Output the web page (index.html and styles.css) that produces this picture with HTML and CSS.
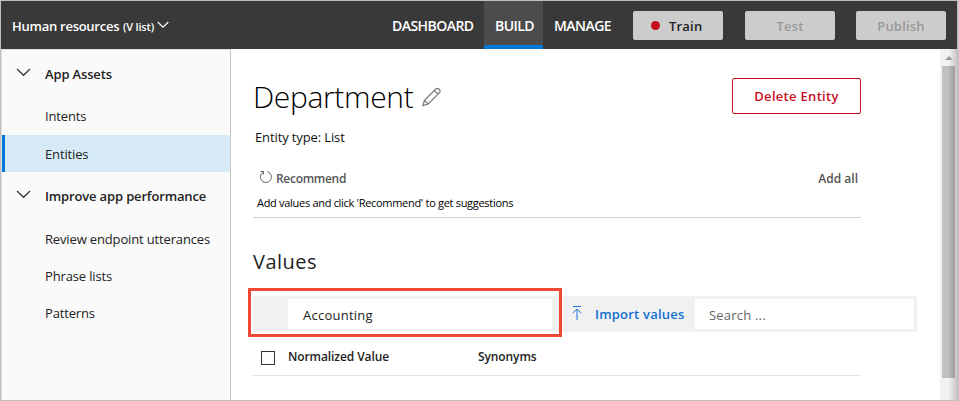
FILE: index.html
```html
<!DOCTYPE html>
<html lang="en">
<head>
<meta charset="utf-8">
<title>Human resources - Entities</title>
<link rel="stylesheet" href="styles.css">
</head>
<body>
<div class="app">
  <header class="topbar">
    <div class="app-name"><span class="name">Human resources</span><span class="version">(V list)</span>
      <svg class="chev-small" width="12" height="8" viewBox="0 0 12 8"><path d="M.7 1l5.3 5.200L11.300 1"/></svg>
    </div>
    <nav class="tabs">
      <a class="tab dashboard">DASHBOARD</a>
      <a class="tab build">BUILD</a>
      <a class="tab manage">MANAGE</a>
    </nav>
    <div class="actions">
      <button class="action train"><i class="dot"></i>Train</button>
      <button class="action test">Test</button>
      <button class="action publish">Publish</button>
    </div>
  </header>
  <div class="body">
    <aside class="sidebar">
      <div class="group"><svg width="15" height="9" viewBox="0 0 15 9"><path d="M1 1l6.500 6.300L14 1"/></svg><span>App Assets</span></div>
      <a class="item">Intents</a>
      <a class="item selected">Entities</a>
      <div class="group second"><svg width="15" height="9" viewBox="0 0 15 9"><path d="M1 1l6.500 6.300L14 1"/></svg><span>Improve app performance</span></div>
      <a class="item">Review endpoint utterances</a>
      <a class="item compact">Phrase lists</a>
      <a class="item">Patterns</a>
    </aside>
    <main class="main">
      <div class="title-row">
        <h1>Department</h1>
        <svg class="pencil" width="20" height="20" viewBox="0 0 20 20"><path d="M1 18.500L2.500 13.300 13.800 2Q15.500 .7 17.200 2.300 18.800 4 17.500 5.700L6.200 17ZM2.500 13.300L6.200 17M12.300 3.500L16 7.200"/></svg>
        <button class="delete">Delete Entity</button>
      </div>
      <p class="type">Entity type: List</p>
      <div class="recommend-row">
        <svg width="14" height="14" viewBox="0 0 14 14"><path d="M8.500 1.700A5.500 5.500 0 1 1 4 2.300M1.500 1.500H4.500V4.500"/></svg>
        <span class="recommend">Recommend</span>
        <span class="add-all">Add all</span>
      </div>
      <p class="hint">Add values and click 'Recommend' to get suggestions</p>
      <h2>Values</h2>
      <div class="toolbar">
        <div class="value-input">Accounting</div>
        <svg class="import-icon" width="10" height="15" viewBox="0 0 10 15"><path d="M1 .5h8M5 14V3.500M.8 7.200L5 3l4.200 4.200"/></svg>
        <span class="import">Import values</span>
        <div class="search">Search ...</div>
        <div class="highlight"></div>
      </div>
      <div class="table-head"><i class="check"></i><span class="normalized">Normalized Value</span><span class="synonyms">Synonyms</span></div>
    </main>
    <div class="scrollbar"><i class="arrow"></i><div class="thumb"></div></div>
  </div>
</div>
</body>
</html>
```
FILE: styles.css
```css
* { box-sizing: border-box; }
body {
  margin: 0;
  font-family: "Open Sans", "Noto Sans", sans-serif;
  font-size: 13px;
  color: #222;
  background: #fff;
}
svg { display: block; fill: none; flex: none; stroke: #333; stroke-width: 1.2; }
h1, h2, p { margin: 0; }
button { font: inherit; padding: 0; }
span, h1, h2, p, a { white-space: nowrap; }
.app {
  width: 959px;
  height: 401px;
  border: 1px solid #bfbfbf;
  border-right: 2px solid #c3c3c3;
  display: flex;
  flex-direction: column;
}
.topbar {
  height: 48px;
  background: #393939;
  color: #fff;
  display: flex;
  flex: none;
}
.app-name {
  width: 370px;
  padding: 2px 0 0 11px;
  display: flex;
  align-items: center;
  font-weight: 600;
}
.name { width: 111px; letter-spacing: -.26px; }
.version { width: 34px; font-size: 11px; letter-spacing: -.2px; }
.chev-small { stroke: #fff; margin-top: -2px; }
.tabs { display: flex; }
.tab {
  height: 48px;
  line-height: 50px;
  font-weight: 600;
  font-size: 14px;
  letter-spacing: -.55px;
}
.dashboard { width: 113px; padding-left: 21px; }
.build {
  width: 59px;
  padding-left: 11px;
  background: #4c4c4c;
  border-bottom: 4px solid #0078d7;
}
.manage { width: 90px; padding-left: 11px; }
.actions { display: flex; gap: 21px; padding-top: 10px; }
.action {
  width: 90px;
  height: 29px;
  border: 0;
  border-radius: 2px;
  background: #ccc;
  color: #999;
  font-weight: 600;
  letter-spacing: .2px;
}
.test { margin-left: 1px; }
.train { display: flex; align-items: center; padding-left: 18px; color: #222; }
.dot { width: 9px; height: 9px; border-radius: 50%; background: #c50f1f; margin-right: 9px; }
.body { display: flex; height: 351px; }
.sidebar {
  width: 230px;
  border-left: 1px solid #ddd;
  border-right: 1px solid #c4c4c4;
  border-top: 1px solid #e1e1e1;
  background: #fafafa;
  padding-top: 5px;
  letter-spacing: -.15px;
}
.group { height: 37px; display: flex; align-items: center; padding-left: 14px; font-weight: 600; margin-bottom: 5px; }
.group svg { margin: -3px 14px 0 0; }
.second { margin: 5px 0 6px; }
.item { display: flex; align-items: center; height: 38px; padding-left: 40px; border-left: 3px solid transparent; }
.compact { height: 36px; }
.selected { height: 37px; background: #d6ebf6; border-left-color: #0078d7; }
.main { width: 709px; padding: 27px 0 0 22px; }
.title-row { display: flex; align-items: flex-start; height: 44px; }
h1 { font-size: 30px; font-weight: 300; line-height: 42px; width: 168px; color: #000; letter-spacing: -.35px; }
.pencil { stroke: #777; margin: 11px 0 0 1px; }
.delete {
  width: 129px;
  height: 36px;
  margin: 2px 0 0 290px;
  border: 1px solid #c50f1f;
  border-radius: 2px;
  background: #fff;
  color: #c50f1f;
  font-weight: 600;
  letter-spacing: .3px;
}
.type { height: 20px; line-height: 20px; margin-top: 7px; padding-left: 2px; color: #111; letter-spacing: -.12px; }
.recommend-row {
  width: 608px;
  height: 20px;
  margin-top: 21px;
  padding: 0 3px 0 6px;
  display: flex;
  align-items: center;
  font-size: 12px;
  font-weight: 600;
  letter-spacing: -.3px;
  color: #555;
}
.recommend-row svg { stroke: #666; margin: -3px 3px 0 0; stroke-width: 1; }
.add-all { margin-left: auto; letter-spacing: 0; }
.hint { width: 608px; height: 25px; margin-top: 5px; padding-left: 4px; line-height: 20px; font-size: 11px; letter-spacing: -.3px; border-bottom: 1px solid #d0d0d0; color: #000; }
h2 { font-size: 20px; font-weight: 400; line-height: 30px; margin-top: 29px; letter-spacing: .5px; }
.toolbar {
  position: relative;
  width: 664px;
  height: 36px;
  margin-top: 19px;
  padding: 3px 3px 3px 35px;
  background: #f1f1f1;
  display: flex;
}
.value-input { width: 264px; height: 30px; padding-left: 15px; line-height: 32px; background: #fff; letter-spacing: .25px; }
.import-icon { stroke: #2372d9; stroke-width: 1; margin: 7px 0 0 20px; }
.import { margin-left: 13px; width: 100px; line-height: 30px; font-weight: 600; color: #0f6fd1; letter-spacing: .22px; }
.search { width: 219px; height: 30px; padding-left: 14px; line-height: 32px; background: #fff; color: #666; letter-spacing: .2px; }
.highlight { position: absolute; left: -5px; top: -8px; width: 314px; height: 49px; border: 3px solid #ef4836; }
.table-head { width: 608px; height: 44px; border-bottom: 1px solid #e3e3e3; display: flex; padding: 15px 0 0 8px; font-size: 12px; font-weight: 600; letter-spacing: -.1px; }
.check { width: 14px; height: 14px; border: 1px solid #333; margin: 4px 13px 0 0; }
.normalized { width: 190px; line-height: 19px; }
.synonyms { line-height: 19px; }
.scrollbar { width: 17px; padding: 7px 2px 0; background: linear-gradient(90deg, #f1f1f1 50%, #c7c7c7); }
.arrow { display: block; width: 0; margin: 0 0 6px 3px; border: 4px solid transparent; border-top: 0; border-bottom-color: #999; }
.thumb { width: 13px; height: 312px; background: linear-gradient(90deg, #c1c1c1 40%, #9e9e9e); }
```
